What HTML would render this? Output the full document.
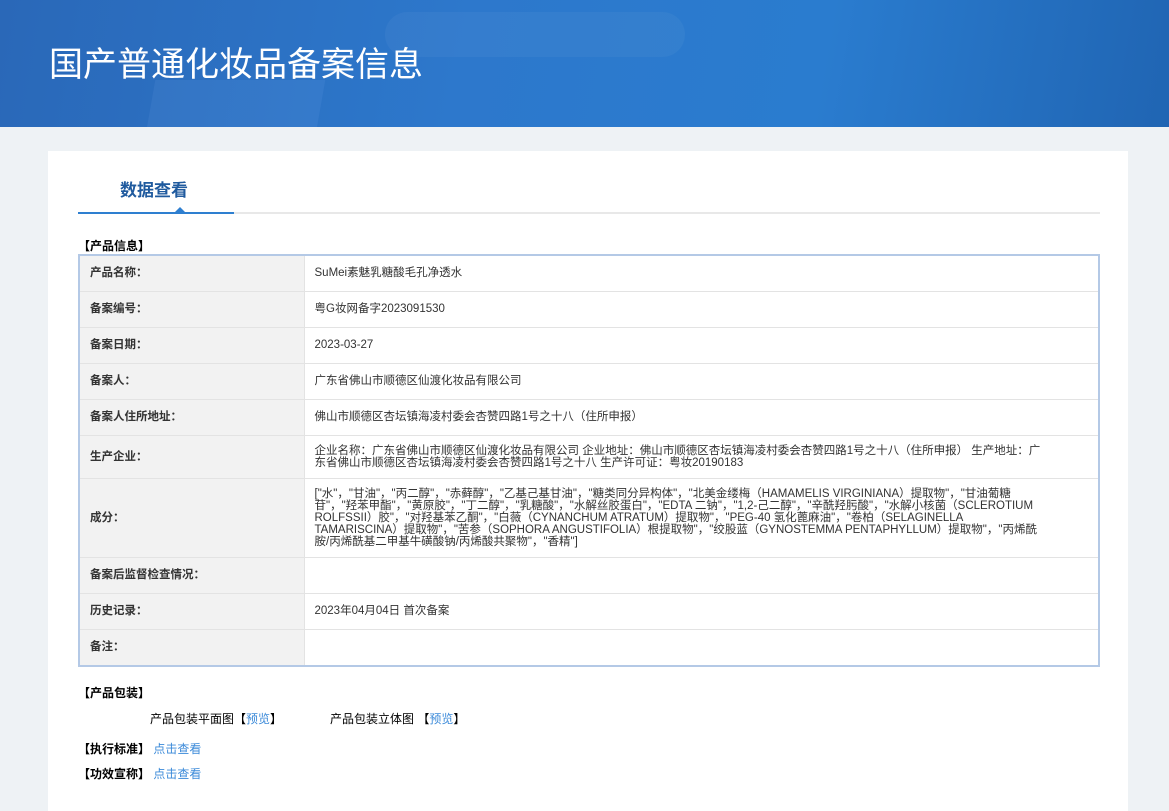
<!DOCTYPE html>
<html><head><meta charset="utf-8"><style>
*{margin:0;padding:0;box-sizing:border-box}
body{width:1169px;height:789px;overflow:hidden;background:#eef2f5;font-family:"Liberation Sans","Noto Sans CJK SC",sans-serif;font-size:12px;color:#333}
.hd{position:absolute;left:0;top:0;width:1169px;height:127px;background:linear-gradient(100deg,#2a68b8 0%,#2d78cc 40%,#2a7ccf 70%,#2065b3 100%);overflow:hidden}
.hd .s1{position:absolute;left:150px;top:80px;width:170px;height:60px;background:rgba(120,170,240,.12);transform:skewX(-10deg)}
.hd .s2{position:absolute;left:385px;top:12px;width:300px;height:45px;border-radius:30px;background:rgba(255,255,255,.04)}
.hd h1{position:absolute;left:49px;top:37px;font-size:34px;font-weight:normal;color:#fff}
.card{position:absolute;left:48px;top:151px;width:1080px;height:660px;background:#fff}
.tab{position:absolute;left:72px;top:25px;font-size:17px;font-weight:bold;color:#1f5a9e}
.line{position:absolute;left:30px;top:61px;width:1022px;height:2px;background:#e8e8e8}
.line b{position:absolute;left:0;top:0;width:156px;height:2px;background:#2e7fd0}
.line i{position:absolute;left:97px;top:-5px;border:5px solid transparent;border-bottom-color:#2e7fd0;border-top:0}
.sec{position:absolute;font-weight:bold;color:#000;font-size:12px}
table{position:absolute;left:30px;top:103px;width:1022px;border-collapse:collapse;border:2px solid #b4c9e6}
td{border-bottom:1px solid #e3e3e3;vertical-align:middle;font-size:11.5px;line-height:12px}
td.l{width:225px;background:#f2f2f2;font-weight:bold;padding-left:10px;color:#333;border-right:1px solid #e3e3e3}
td.v{padding-left:10px;color:#333}
a{color:#3b8ad9;text-decoration:none}
</style></head><body>
<div class="hd"><div class="s1"></div><div class="s2"></div><h1>国产普通化妆品备案信息</h1></div>
<div class="card">
<div class="tab">数据查看</div>
<div class="line"><b></b><i></i></div>
<div class="sec" style="left:30px;top:86px">【产品信息】</div>
<table>
<tr style="height:36px"><td class="l">产品名称：</td><td class="v">SuMei素魅乳糖酸毛孔净透水</td></tr>
<tr style="height:36px"><td class="l">备案编号：</td><td class="v">粤G妆网备字2023091530</td></tr>
<tr style="height:36px"><td class="l">备案日期：</td><td class="v">2023-03-27</td></tr>
<tr style="height:36px"><td class="l">备案人：</td><td class="v">广东省佛山市顺德区仙渡化妆品有限公司</td></tr>
<tr style="height:36px"><td class="l">备案人住所地址：</td><td class="v">佛山市顺德区杏坛镇海凌村委会杏赞四路1号之十八（住所申报）</td></tr>
<tr style="height:43px"><td class="l">生产企业：</td><td class="v" style="padding-right:50px">企业名称：广东省佛山市顺德区仙渡化妆品有限公司 企业地址：佛山市顺德区杏坛镇海凌村委会杏赞四路1号之十八（住所申报） 生产地址：广东省佛山市顺德区杏坛镇海凌村委会杏赞四路1号之十八 生产许可证：粤妆20190183</td></tr>
<tr style="height:79px"><td class="l">成分：</td><td class="v" style="padding-right:50px">["水"，"甘油"，"丙二醇"，"赤藓醇"，"乙基己基甘油"，"糖类同分异构体"，"北美金缕梅（HAMAMELIS VIRGINIANA）提取物"，"甘油葡糖苷"，"羟苯甲酯"，"黄原胶"，"丁二醇"，"乳糖酸"，"水解丝胶蛋白"，"EDTA 二钠"，"1,2-己二醇"，"辛酰羟肟酸"，"水解小核菌（SCLEROTIUM ROLFSSII）胶"，"对羟基苯乙酮"，"白薇（CYNANCHUM ATRATUM）提取物"，"PEG-40 氢化蓖麻油"，"卷柏（SELAGINELLA TAMARISCINA）提取物"，"苦参（SOPHORA ANGUSTIFOLIA）根提取物"，"绞股蓝（GYNOSTEMMA PENTAPHYLLUM）提取物"，"丙烯酰胺/丙烯酰基二甲基牛磺酸钠/丙烯酸共聚物"，"香精"]</td></tr>
<tr style="height:36px"><td class="l">备案后监督检查情况：</td><td class="v"></td></tr>
<tr style="height:36px"><td class="l">历史记录：</td><td class="v">2023年04月04日 首次备案</td></tr>
<tr style="height:37px"><td class="l">备注：</td><td class="v"></td></tr>
</table>
<div class="sec" style="left:30px;top:533px">【产品包装】</div>
<div style="position:absolute;left:102px;top:559px;color:#000">产品包装平面图【<a>预览</a>】</div>
<div style="position:absolute;left:282px;top:559px;color:#000">产品包装立体图 【<a>预览</a>】</div>
<div class="sec" style="left:30px;top:589px">【执行标准】 <a style="font-weight:normal">点击查看</a></div>
<div class="sec" style="left:30px;top:614px">【功效宣称】 <a style="font-weight:normal">点击查看</a></div>
</div>
</body></html>
